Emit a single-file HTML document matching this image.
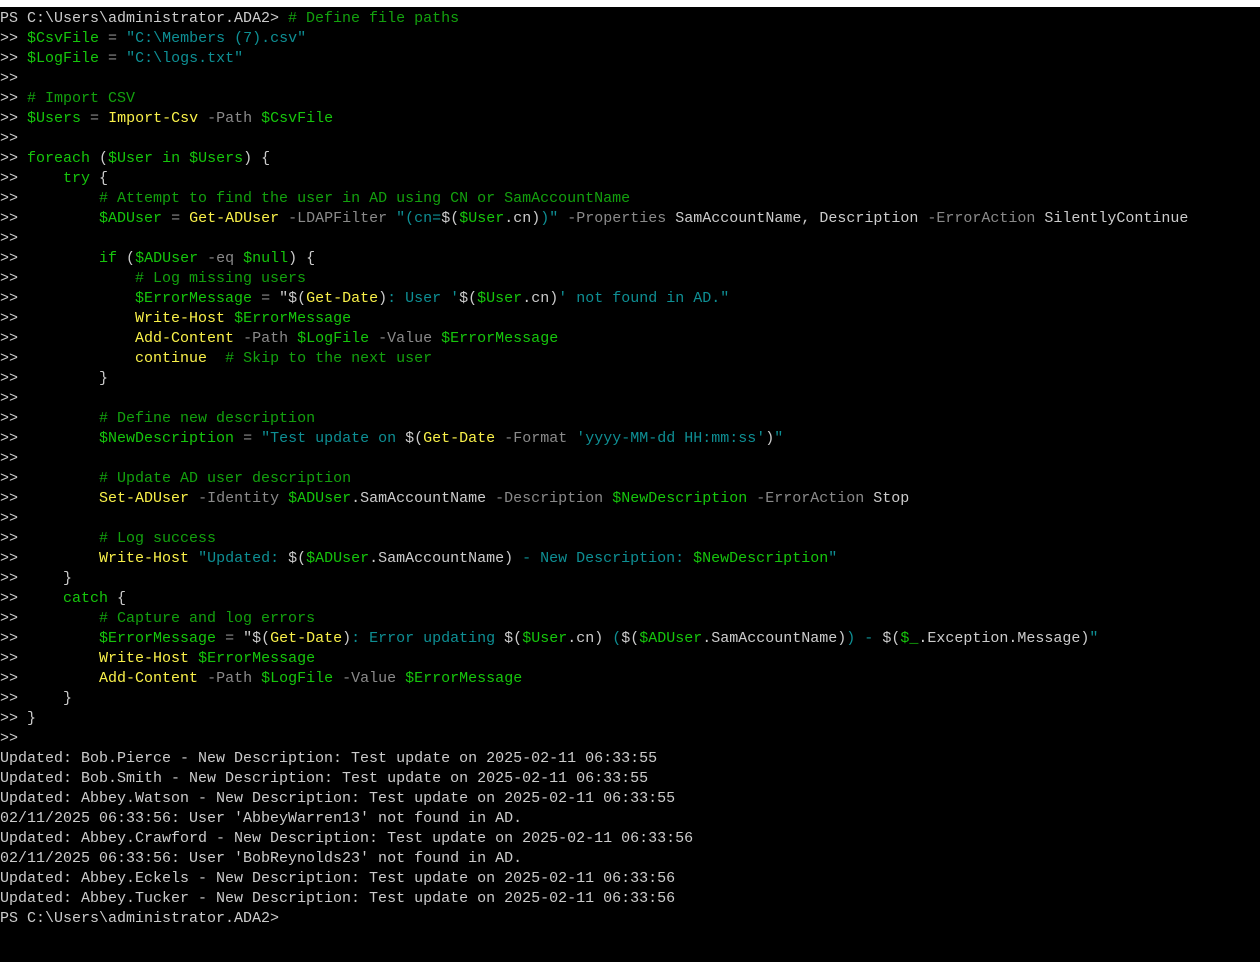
<!DOCTYPE html>
<html><head><meta charset="utf-8"><style>
html,body{margin:0;padding:0;background:#000;width:1260px;height:962px;overflow:hidden}
.top{height:7px;background:#fff}
pre{margin:0;padding-top:2px;font-family:"Liberation Mono",monospace;font-size:15px;line-height:20px;color:#cccccc;white-space:pre}
.c{color:#13a10e}.v{color:#16c60c}.s{color:#0e8f94}.k{color:#f9f14a}.p{color:#8a8a8a}
</style></head><body><div class="top"></div><pre>PS C:\Users\administrator.ADA2&gt; <span class="c"># Define file paths</span>
&gt;&gt; <span class="v">$CsvFile</span> <span class="p">=</span> <span class="s">"C:\Members (7).csv"</span>
&gt;&gt; <span class="v">$LogFile</span> <span class="p">=</span> <span class="s">"C:\logs.txt"</span>
&gt;&gt;
&gt;&gt; <span class="c"># Import CSV</span>
&gt;&gt; <span class="v">$Users</span> <span class="p">=</span> <span class="k">Import-Csv</span> <span class="p">-Path</span> <span class="v">$CsvFile</span>
&gt;&gt;
&gt;&gt; <span class="v">foreach</span> (<span class="v">$User</span> <span class="v">in</span> <span class="v">$Users</span>) {
&gt;&gt;     <span class="v">try</span> {
&gt;&gt;         <span class="c"># Attempt to find the user in AD using CN or SamAccountName</span>
&gt;&gt;         <span class="v">$ADUser</span> <span class="p">=</span> <span class="k">Get-ADUser</span> <span class="p">-LDAPFilter</span> <span class="s">"(cn=</span>$(<span class="v">$User</span>.cn)<span class="s">)"</span> <span class="p">-Properties</span> SamAccountName, Description <span class="p">-ErrorAction</span> SilentlyContinue
&gt;&gt;
&gt;&gt;         <span class="v">if</span> (<span class="v">$ADUser</span> <span class="p">-eq</span> <span class="v">$null</span>) {
&gt;&gt;             <span class="c"># Log missing users</span>
&gt;&gt;             <span class="v">$ErrorMessage</span> <span class="p">=</span> "$(<span class="k">Get-Date</span>)<span class="s">: User '</span>$(<span class="v">$User</span>.cn)<span class="s">' not found in AD."</span>
&gt;&gt;             <span class="k">Write-Host</span> <span class="v">$ErrorMessage</span>
&gt;&gt;             <span class="k">Add-Content</span> <span class="p">-Path</span> <span class="v">$LogFile</span> <span class="p">-Value</span> <span class="v">$ErrorMessage</span>
&gt;&gt;             <span class="k">continue</span>  <span class="c"># Skip to the next user</span>
&gt;&gt;         }
&gt;&gt;
&gt;&gt;         <span class="c"># Define new description</span>
&gt;&gt;         <span class="v">$NewDescription</span> <span class="p">=</span> <span class="s">"Test update on </span>$(<span class="k">Get-Date</span> <span class="p">-Format</span> <span class="s">'yyyy-MM-dd HH:mm:ss'</span>)<span class="s">"</span>
&gt;&gt;
&gt;&gt;         <span class="c"># Update AD user description</span>
&gt;&gt;         <span class="k">Set-ADUser</span> <span class="p">-Identity</span> <span class="v">$ADUser</span>.SamAccountName <span class="p">-Description</span> <span class="v">$NewDescription</span> <span class="p">-ErrorAction</span> Stop
&gt;&gt;
&gt;&gt;         <span class="c"># Log success</span>
&gt;&gt;         <span class="k">Write-Host</span> <span class="s">"Updated: </span>$(<span class="v">$ADUser</span>.SamAccountName)<span class="s"> - New Description: </span><span class="v">$NewDescription</span><span class="s">"</span>
&gt;&gt;     }
&gt;&gt;     <span class="v">catch</span> {
&gt;&gt;         <span class="c"># Capture and log errors</span>
&gt;&gt;         <span class="v">$ErrorMessage</span> <span class="p">=</span> "$(<span class="k">Get-Date</span>)<span class="s">: Error updating </span>$(<span class="v">$User</span>.cn)<span class="s"> (</span>$(<span class="v">$ADUser</span>.SamAccountName)<span class="s">) - </span>$(<span class="v">$_</span>.Exception.Message)<span class="s">"</span>
&gt;&gt;         <span class="k">Write-Host</span> <span class="v">$ErrorMessage</span>
&gt;&gt;         <span class="k">Add-Content</span> <span class="p">-Path</span> <span class="v">$LogFile</span> <span class="p">-Value</span> <span class="v">$ErrorMessage</span>
&gt;&gt;     }
&gt;&gt; }
&gt;&gt;
Updated: Bob.Pierce - New Description: Test update on 2025-02-11 06:33:55
Updated: Bob.Smith - New Description: Test update on 2025-02-11 06:33:55
Updated: Abbey.Watson - New Description: Test update on 2025-02-11 06:33:55
02/11/2025 06:33:56: User 'AbbeyWarren13' not found in AD.
Updated: Abbey.Crawford - New Description: Test update on 2025-02-11 06:33:56
02/11/2025 06:33:56: User 'BobReynolds23' not found in AD.
Updated: Abbey.Eckels - New Description: Test update on 2025-02-11 06:33:56
Updated: Abbey.Tucker - New Description: Test update on 2025-02-11 06:33:56
PS C:\Users\administrator.ADA2&gt;</pre></body></html>
